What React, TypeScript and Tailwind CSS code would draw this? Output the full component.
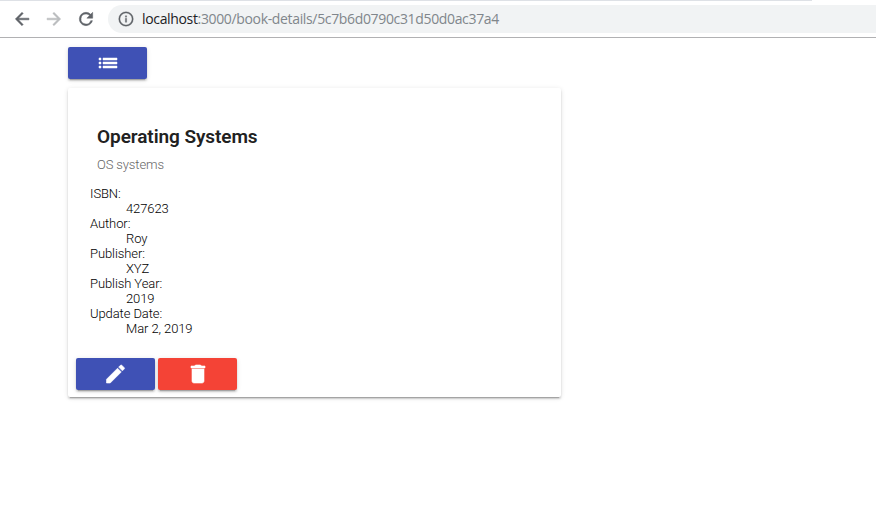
import type { ReactNode } from "react";

const details = [
  ["ISBN:", "427623"],
  ["Author:", "Roy"],
  ["Publisher:", "XYZ"],
  ["Publish Year:", "2019"],
  ["Update Date:", "Mar 2, 2019"],
];

function Icon({ d, size, className = "" }: { d: string; size: number; className?: string }) {
  return (
    <svg width={size} height={size} viewBox="0 0 24 24" fill="currentColor" className={`shrink-0 ${className}`}>
      <path d={d} />
    </svg>
  );
}

function RaisedButton({ label, color, children }: { label: string; color: string; children: ReactNode }) {
  return (
    <button
      aria-label={label}
      className={`flex h-8 w-[79px] items-center justify-center rounded-[2px] text-white shadow-[0_3px_1px_-2px_rgba(0,0,0,0.2),0_2px_2px_0_rgba(0,0,0,0.14),0_1px_5px_0_rgba(0,0,0,0.12)] ${color}`}
    >
      {children}
    </button>
  );
}

function BrowserBar() {
  return (
    <header className="h-[38px] border-b border-[#b1b1b3] bg-white">
      <div className="h-px w-[812px] bg-[#dee1e6]" />
      <div className="flex h-9 items-center pl-3">
        <Icon size={20} className="stroke-current stroke-[0.6] text-[#5f6368]" d="M20.3 11H7.8l5.6-5.6L12 4l-8 8 8 8 1.4-1.4L7.8 13h12.5z" />
        <Icon size={20} className="ml-3 stroke-current stroke-[0.6] text-[#babcbe]" d="m12 4-1.4 1.4 5.6 5.6H3.7v2h12.5l-5.6 5.6L12 20l8-8z" />
        <Icon
          size={20}
          className="ml-3 stroke-current stroke-[0.6] text-[#5f6368]"
          d="M17.65 6.35A7.96 7.96 0 0 0 12 4a8 8 0 1 0 7.73 10h-2.08A6 6 0 1 1 12 6c1.66 0 3.14.69 4.22 1.78L13 11h7V4z"
        />
        <div className="ml-3 flex h-7 flex-1 items-center rounded-l-full bg-[#f1f3f4] pl-[10px]">
          <Icon
            size={16}
            className="stroke-current stroke-[0.4] text-[#5f6368]"
            d="M11 7h2v2.2h-2zm0 4h2v6h-2zm1-10a11 11 0 1 0 0 22 11 11 0 0 0 0-22zm0 20a9 9 0 1 1 0-18 9 9 0 0 1 0 18z"
          />
          <span className="ml-2 whitespace-nowrap font-['Open_Sans',sans-serif] text-[14px] leading-[28px] tracking-[-0.345px] text-[#80868b]">
            <span className="text-[#202124]">localhost</span>:3000/book-details/5c7b6d0790c31d50d0ac37a4
          </span>
        </div>
      </div>
    </header>
  );
}

export default function App() {
  return (
    <div className="h-[526px] w-[876px] overflow-hidden bg-white font-['Roboto',sans-serif]">
      <BrowserBar />
      <main className="pl-[68px] pt-[9px]">
        <RaisedButton label="Book list" color="bg-[#3f51b5]">
          <Icon
            size={24}
            className="stroke-current stroke-[0.5]"
            d="M3 13h2v-2H3v2zm0 4h2v-2H3v2zm0-8h2V7H3v2zm4 4h14v-2H7v2zm0 4h14v-2H7v2zM7 7v2h14V7H7z"
          />
        </RaisedButton>
        <section className="mt-[9px] h-[309px] w-[493px] rounded-[2px] bg-white px-2 pt-[37px] shadow-[0_3px_1px_-2px_rgba(0,0,0,0.2),0_2px_2px_0_rgba(0,0,0,0.14),0_1px_5px_0_rgba(0,0,0,0.12)]">
          <h2 className="pl-[21px] text-[19px] font-semibold leading-6 tracking-[-0.08px] text-[#212121]">Operating Systems</h2>
          <p className="mt-2 pl-[21px] text-[13px] font-light leading-4 tracking-[-0.12px] text-[#666666]">OS systems</p>
          <dl className="mt-[13px] pl-[14px] text-[13px] font-light leading-[15px] tracking-[-0.09px] text-black">
            {details.map(([term, value]) => (
              <div key={term}>
                <dt>{term}</dt>
                <dd className="pl-9">{value}</dd>
              </div>
            ))}
          </dl>
          <div className="mt-[22px] flex gap-[3px]">
            <RaisedButton label="Edit" color="bg-[#3f51b5]">
              <Icon
                size={24}
                className="-translate-x-[0.5px] stroke-current stroke-[0.6]"
                d="M3 17.25V21h3.75L17.81 9.94l-3.75-3.75L3 17.25zM20.71 7.04a1 1 0 0 0 0-1.41l-2.34-2.34a1 1 0 0 0-1.41 0l-1.83 1.83 3.75 3.75 1.83-1.83z"
              />
            </RaisedButton>
            <RaisedButton label="Delete" color="bg-[#f44336]">
              <Icon size={24} className="stroke-current stroke-[0.6]" d="M6 19c0 1.1.9 2 2 2h8c1.1 0 2-.9 2-2V7H6v12zM19 4h-3.5l-1-1h-5l-1 1H5v2h14V4z" />
            </RaisedButton>
          </div>
        </section>
      </main>
    </div>
  );
}
